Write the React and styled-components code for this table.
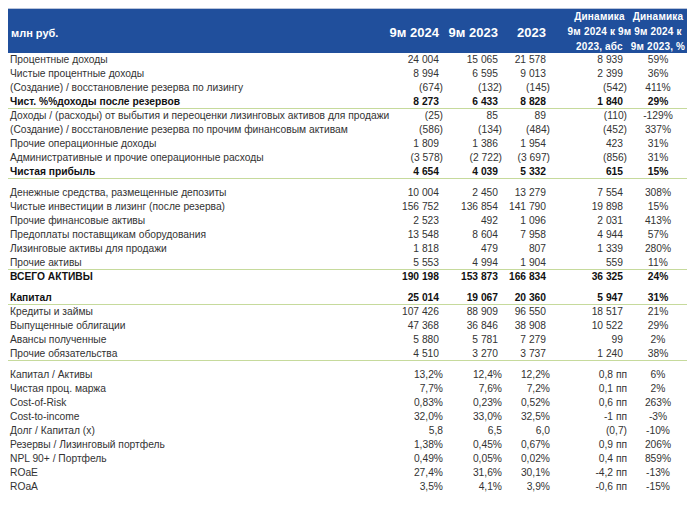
import React from 'react';
import styled, { createGlobalStyle } from 'styled-components';

const GlobalStyle = createGlobalStyle`
  html, body {
    margin: 0;
    padding: 0;
    background: #fff;
  }
  body {
    font-family: "Liberation Sans", Arial, sans-serif;
  }
`;

// widths of the six columns, right padding of the number cells
const COLS = '379px 58px 59px 58px 67px 58px';
const PAD = [0, 2, 2, 12, 2, 0];

const Table = styled.div`
  margin: 8px 0 0 8px;
  width: 679px;
`;

const HeadRow = styled.div`
  display: grid;
  grid-template-columns: ${COLS};
  height: 45px;
  background: #204f9c;
  border-top: 1px solid #b9c4da;
  box-sizing: border-box;
  color: #fff;
  font-weight: 700;
`;

const HeadLabel = styled.div`
  display: flex;
  align-items: center;
  padding-left: 3px;
  padding-top: 2px;
  font-size: 11px;
`;

const HeadYear = styled.div`
  display: flex;
  align-items: center;
  justify-content: flex-end;
  padding-top: 2px;
  padding-right: ${p => p.$pad + 4}px;
  font-size: 13px;
`;

const HeadDyn = styled.div`
  display: flex;
  flex-direction: column;
  justify-content: center;
  align-items: center;
  padding-left: ${p => p.$shift}px;
  font-size: 10px;
  letter-spacing: 0.2px;
  line-height: 15px;
  white-space: nowrap;
`;

const Row = styled.div`
  display: grid;
  grid-template-columns: ${COLS};
  height: 14px;
  line-height: 14px;
  font-size: 10.25px;
  color: ${p => (p.$bold ? '#111' : '#333')};
  font-weight: ${p => (p.$bold ? 700 : 400)};
  box-shadow: ${p => (p.$line ? 'inset 0 -1px 0 #c6da9c' : 'none')};
`;

const Label = styled.div`
  padding-left: 2px;
  white-space: nowrap;
`;

const Num = styled.div`
  text-align: ${p => (p.$center ? 'center' : 'right')};
  padding-right: ${p => (p.$center ? 0 : p.$pad + (p.$trail ? 4 : 0))}px;
  white-space: nowrap;
`;

const Gap = styled.div`
  height: 7px;
`;

const sections = [
  {
    acc: true,
    rows: [
      ['Процентные доходы', '24 004', '15 065', '21 578', '8 939', '59%'],
      ['Чистые процентные доходы', '8 994', '6 595', '9 013', '2 399', '36%'],
      ['(Создание) / восстановление резерва по лизингу', '(674)', '(132)', '(145)', '(542)', '411%'],
      ['Чист. %%доходы после резервов', '8 273', '6 433', '8 828', '1 840', '29%', 'bl'],
      ['Доходы / (расходы) от выбытия и переоценки лизинговых активов для продажи', '(25)', '85', '89', '(110)', '-129%'],
      ['(Создание) / восстановление резерва по прочим финансовым активам', '(586)', '(134)', '(484)', '(452)', '337%'],
      ['Прочие операционные доходы', '1 809', '1 386', '1 954', '423', '31%'],
      ['Административные и прочие операционные расходы', '(3 578)', '(2 722)', '(3 697)', '(856)', '31%'],
      ['Чистая прибыль', '4 654', '4 039', '5 332', '615', '15%', 'bl'],
    ],
  },
  {
    acc: true,
    rows: [
      ['Денежные средства, размещенные депозиты', '10 004', '2 450', '13 279', '7 554', '308%'],
      ['Чистые инвестиции в лизинг (после резерва)', '156 752', '136 854', '141 790', '19 898', '15%'],
      ['Прочие финансовые активы', '2 523', '492', '1 096', '2 031', '413%'],
      ['Предоплаты поставщикам оборудования', '13 548', '8 604', '7 958', '4 944', '57%'],
      ['Лизинговые активы для продажи', '1 818', '479', '807', '1 339', '280%'],
      ['Прочие активы', '5 553', '4 994', '1 904', '559', '11%', 'l'],
      ['ВСЕГО АКТИВЫ', '190 198', '153 873', '166 834', '36 325', '24%', 'b'],
    ],
  },
  {
    acc: true,
    rows: [
      ['Капитал', '25 014', '19 067', '20 360', '5 947', '31%', 'bl'],
      ['Кредиты и займы', '107 426', '88 909', '96 550', '18 517', '21%'],
      ['Выпущенные облигации', '47 368', '36 846', '38 908', '10 522', '29%'],
      ['Авансы полученные', '5 880', '5 781', '7 279', '99', '2%'],
      ['Прочие обязательства', '4 510', '3 270', '3 737', '1 240', '38%', 'l'],
    ],
  },
  {
    acc: false,
    rows: [
      ['Капитал / Активы', '13,2%', '12,4%', '12,2%', '0,8 пп', '6%'],
      ['Чистая проц. маржа', '7,7%', '7,6%', '7,2%', '0,1 пп', '2%'],
      ['Cost-of-Risk', '0,83%', '0,23%', '0,52%', '0,6 пп', '263%'],
      ['Cost-to-income', '32,0%', '33,0%', '32,5%', '-1 пп', '-3%'],
      ['Долг / Капитал (x)', '5,8', '6,5', '6,0', '(0,7)', '-10%'],
      ['Резервы / Лизинговый портфель', '1,38%', '0,45%', '0,67%', '0,9 пп', '206%'],
      ['NPL 90+ / Портфель', '0,49%', '0,05%', '0,02%', '0,4 пп', '859%'],
      ['ROaE', '27,4%', '31,6%', '30,1%', '-4,2 пп', '-13%'],
      ['ROaA', '3,5%', '4,1%', '3,9%', '-0,6 пп', '-15%'],
    ],
  },
];

function DataRow({ row, acc }) {
  const [label, ...rest] = row;
  const flags = rest.length > 5 ? rest[5] : '';
  const values = rest.slice(0, 5);
  return (
    <Row $bold={flags.includes('b')} $line={flags.includes('l')}>
      <Label>{label}</Label>
      {values.map((v, i) => (
        <Num
          key={i}
          $pad={PAD[i + 1]}
          $center={i === 4}
          $trail={acc && !v.endsWith(')')}
        >
          {v}
        </Num>
      ))}
    </Row>
  );
}

export default function App() {
  return (
    <>
      <GlobalStyle />
      <Table>
        <HeadRow>
          <HeadLabel>млн руб.</HeadLabel>
          <HeadYear $pad={PAD[1]}>9м 2024</HeadYear>
          <HeadYear $pad={PAD[2]}>9м 2023</HeadYear>
          <HeadYear $pad={PAD[3]}>2023</HeadYear>
          <HeadDyn $shift={8}>
            <span>Динамика</span>
            <span>9м 2024 к 9м</span>
            <span>2023, абс</span>
          </HeadDyn>
          <HeadDyn $shift={0}>
            <span>Динамика</span>
            <span>9м 2024 к</span>
            <span>9м 2023, %</span>
          </HeadDyn>
        </HeadRow>
        {sections.map((s, si) => (
          <React.Fragment key={si}>
            {si > 0 && <Gap />}
            {s.rows.map((r, ri) => (
              <DataRow key={ri} row={r} acc={s.acc} />
            ))}
          </React.Fragment>
        ))}
      </Table>
    </>
  );
}
